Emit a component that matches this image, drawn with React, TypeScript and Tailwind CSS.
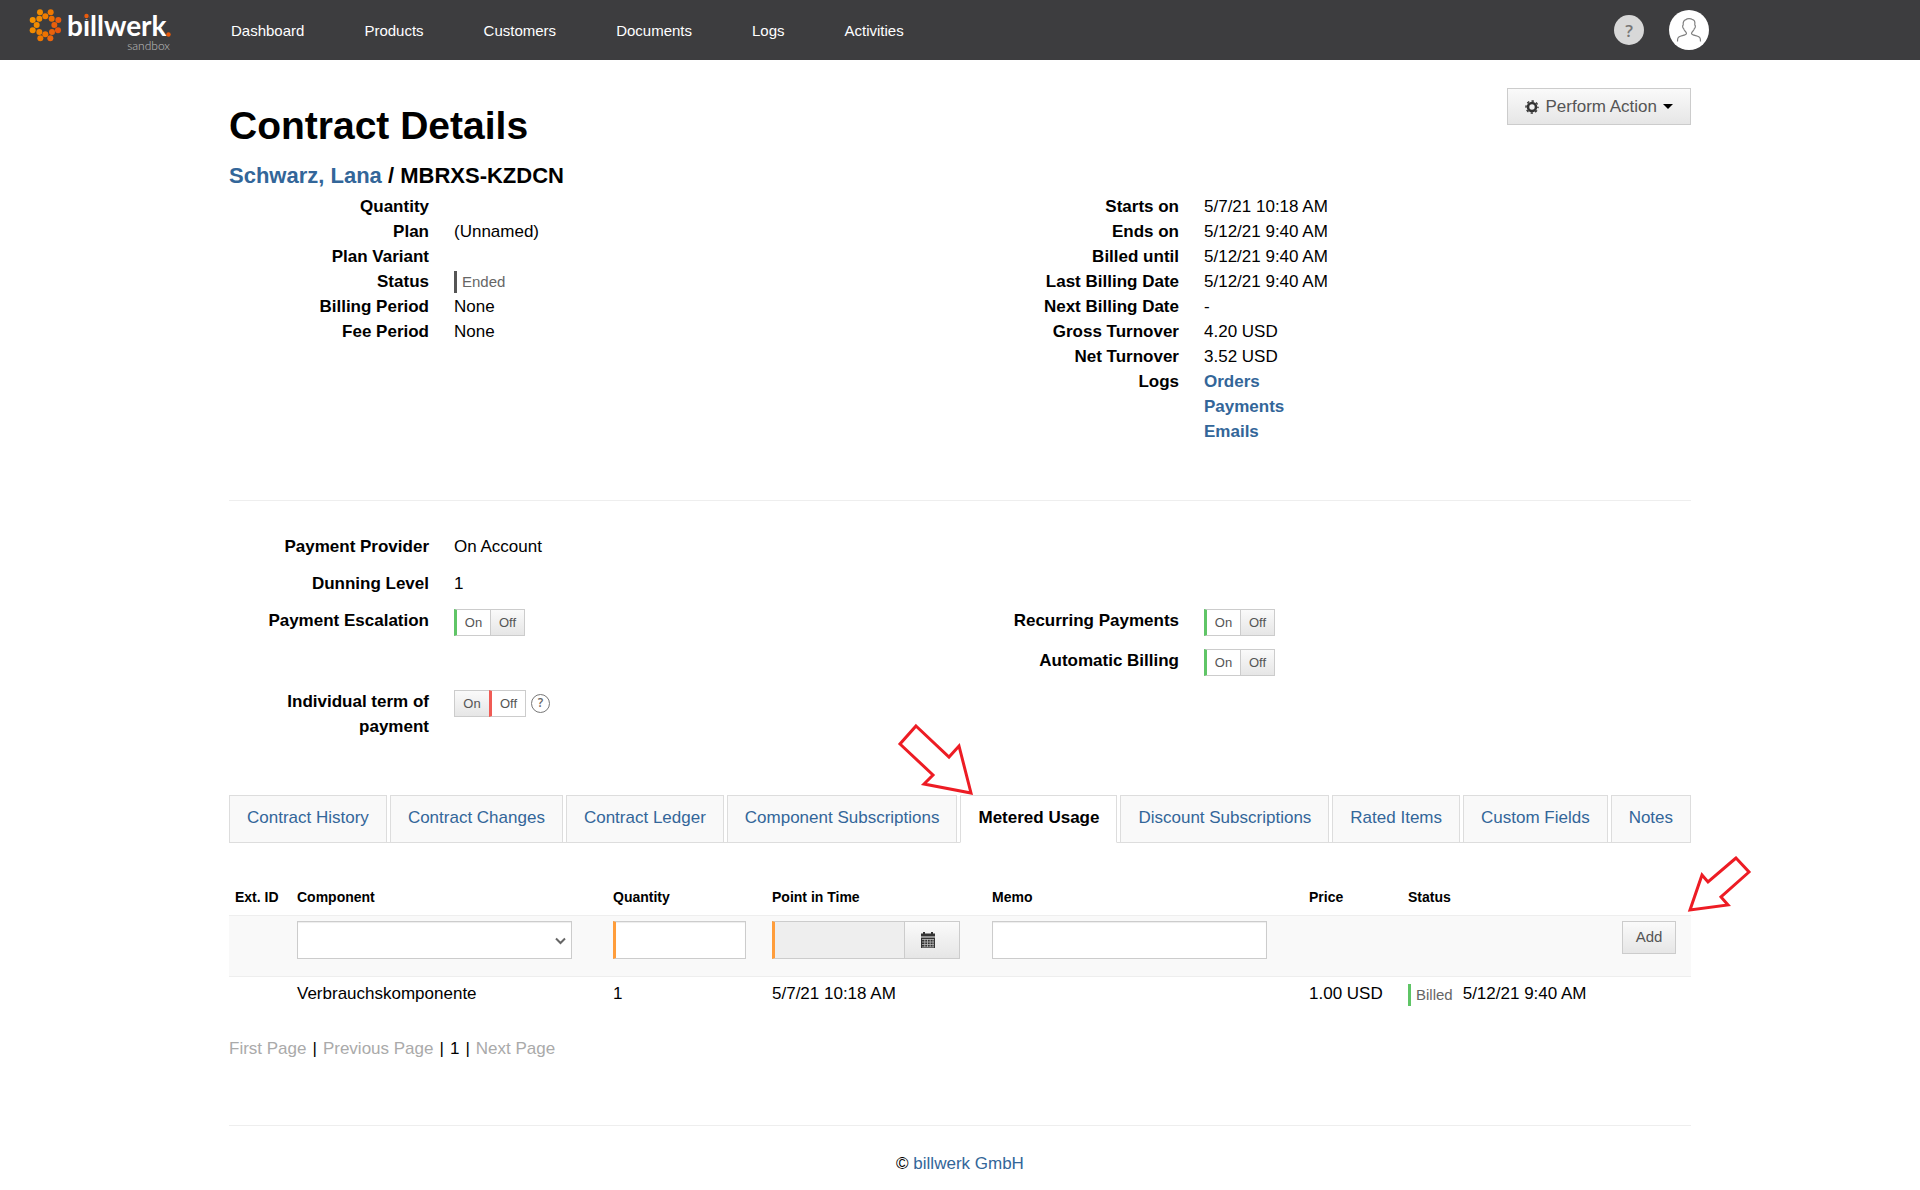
import type { ReactNode } from "react";
import clsx from "clsx";

const navItems = ["Dashboard", "Products", "Customers", "Documents", "Logs", "Activities"];

const tabs = [
  "Contract History",
  "Contract Changes",
  "Contract Ledger",
  "Component Subscriptions",
  "Metered Usage",
  "Discount Subscriptions",
  "Rated Items",
  "Custom Fields",
  "Notes",
];

const logoDots = [
  [75, 37, "#f08a00"], [107, 37, "#f07800"],
  [53, 60, "#f59200"], [73, 56, "#f28a00"], [91, 49, "#f07d00"], [110, 56, "#ee6d00"], [130, 60, "#ea5b0c"],
  [65, 75, "#f28c00"], [118, 75, "#ea5f0c"],
  [53, 91, "#f28c00"], [73, 96, "#f08000"], [91, 103, "#ee7200"], [111, 96, "#ea620c"], [129, 91, "#e8560c"],
  [76, 115, "#ee7800"], [106, 115, "#ec660c"],
] as const;

const Logo = () => (
  <a href="#" aria-label="billwerk sandbox">
    <svg width="142" height="60" viewBox="29 0 142 60">
      <g transform="translate(15 0) scale(0.3333)">
        {logoDots.map(([cx, cy, fill]) => (
          <circle key={`${cx}-${cy}`} cx={cx} cy={cy} r="9" fill={fill} />
        ))}
      </g>
      <text x="67" y="36" fill="#fff" fontFamily="Lato, sans-serif" fontWeight="700" fontSize="28">
        billwerk
      </text>
      {/* the i has an orange dot */}
      <rect x="84" y="12" width="5" height="7" fill="#3d3d3f" />
      <circle cx="86.500" cy="16" r="2.200" fill="#ea5b0c" />
      <circle cx="168.500" cy="34.500" r="2.200" fill="#ea5b0c" />
      <text x="170" y="50" textAnchor="end" fill="#c0c0c0" fontFamily="Lato, sans-serif" fontWeight="300" fontSize="12">
        sandbox
      </text>
    </svg>
  </a>
);

const Header = () => (
  <header className="flex h-[60px] items-center bg-[#3d3d3f] pr-[211px] pl-[29px]">
    <Logo />
    <nav className="ml-[60px] flex gap-[60px] text-[15px] text-white">
      {navItems.map((item) => (
        <a key={item} href="#">
          {item}
        </a>
      ))}
    </nav>
    <button
      aria-label="Help"
      className="ml-auto flex size-[30px] items-center justify-center rounded-full bg-[#d8d8d8] font-['Open_Sans',sans-serif] text-[17px] font-semibold text-[#777]"
    >
      ?
    </button>
    <button aria-label="Account" className="ml-[25px] flex size-10 items-center justify-center rounded-full bg-white">
      <svg width="26" height="26" viewBox="0 0 26 26" fill="none" stroke="#808080" strokeWidth="1.2">
        <path d="M1.5 24.500C1.500 21 2 19.800 5 19C8 18.200 10.500 17.800 10.500 16.500C10.500 14.500 8 14 7.600 11.500C6.500 11 6.300 8.500 7.200 8C6.800 4 8.500 3 10 2.600C11 1.500 14.500 1.300 16 2.300C18.500 2.500 19.200 5 18.800 8C19.700 8.500 19.500 11 18.400 11.500C18 14 15.500 14.500 15.500 16.500C15.500 17.800 18 18.200 21 19C24 19.800 24.500 21 24.500 24.500" />
      </svg>
    </button>
  </header>
);

const Row = ({ label, children }: { label: string; children?: ReactNode }) => (
  <div className="flex gap-[25px]">
    <dt className="w-[200px] shrink-0 text-right font-bold">{label}</dt>
    <dd>{children}</dd>
  </div>
);

const StatusLabel = ({ className, children }: { className: string; children: ReactNode }) => (
  <span className={clsx("inline-block h-[22px] border-l-3 pl-[5px] align-top text-[15px] leading-[22px] text-[#666]", className)}>
    {children}
  </span>
);

const Toggle = ({ label, on = true }: { label: string; on?: boolean }) => (
  <div role="group" aria-label={label} className="mt-px flex h-[27px] text-[13px] text-[#555]">
    <button
      aria-pressed={on}
      className={clsx(
        "border-y border-[#ccc]",
        on ? "w-9 border-l-3 border-l-[#5fc566] bg-white" : "w-[35px] border-l bg-linear-to-b from-[#fafafa] to-[#e6e6e6]"
      )}
    >
      On
    </button>
    <button
      aria-pressed={!on}
      className={clsx(
        "border border-[#ccc]",
        on ? "w-[35px] bg-linear-to-b from-[#fafafa] to-[#e6e6e6]" : "w-[37px] border-l-3 border-l-[#f05b55] bg-white"
      )}
    >
      Off
    </button>
  </div>
);

const Tabs = () => (
  <div role="tablist" className="flex h-12 gap-[3px] border-b border-[#ddd]">
    {tabs.map((tab) => {
      const active = tab === "Metered Usage";
      return (
        <div key={tab} className="relative">
          <button
            role="tab"
            aria-selected={active}
            className={clsx(
              "h-12 border border-[#ddd] px-[17px] pb-[3px] whitespace-nowrap",
              active ? "border-b-white bg-white font-bold text-black" : "bg-[#f9f9f9] text-[#336699]"
            )}
          >
            {tab}
          </button>
          {active && (
            <svg className="absolute -top-[73px] -left-16" width="80" height="76" fill="none" stroke="#ed1c24" strokeWidth="3">
              <path d="M20 4 53 35 63 24 75 71 28 62 37 53 4 22Z" />
            </svg>
          )}
        </div>
      );
    })}
  </div>
);

const CalendarIcon = () => (
  <svg width="14" height="16" viewBox="0 0 14 16">
    <path fill="#333" d="M0 1.500H2V0H4V1.500H10V0H12V1.500H14V4.500H0ZM0 5.500H14V16H0Z" />
    <path stroke="#bbb" strokeWidth="0.800" d="M1 7.500H13M1 10H13M1 12.500H13M1 15H13M3.800 7V15M6.500 7V15M9.200 7V15M12 7V15" />
  </svg>
);

const UsageTable = () => (
  <div className="relative mt-[42px]">
    <table className="w-full table-fixed text-left">
      <colgroup>
        <col className="w-[62px]" />
        <col className="w-[316px]" />
        <col className="w-[159px]" />
        <col className="w-[220px]" />
        <col className="w-[317px]" />
        <col className="w-[99px]" />
        <col className="w-[214px]" />
        <col className="w-[75px]" />
      </colgroup>
      <thead>
        <tr className="h-[30px] align-top text-[14px] leading-[25px] whitespace-nowrap">
          <th className="px-[6px]">Ext. ID</th>
          <th className="px-[6px]" id="component">Component</th>
          <th className="px-[6px]" id="quantity">Quantity</th>
          <th className="px-[6px]" id="time">Point in Time</th>
          <th className="px-[6px]" id="memo">Memo</th>
          <th className="px-[6px]">Price</th>
          <th className="px-[6px]">Status</th>
          <th aria-label="Actions" />
        </tr>
      </thead>
      <tbody>
        <tr className="h-[61px] border-y border-[#eee] bg-[#f9f9f9] align-top">
          <td />
          <td className="px-[6px] pt-[5px]">
            <div className="relative w-[275px]">
              <select
                aria-labelledby="component"
                className="block h-[38px] w-full appearance-none border border-[#ccc] bg-white shadow-[inset_0_1px_1px_rgba(0,0,0,0.075)]"
              />
              <svg className="pointer-events-none absolute top-[16px] right-[6px]" width="11" height="8" fill="none" stroke="#666" strokeWidth="2">
                <path d="M1 1.500 5.500 6 10 1.500" />
              </svg>
            </div>
          </td>
          <td className="px-[6px] pt-[5px]">
            <input
              aria-labelledby="quantity"
              className="block h-[38px] w-[133px] border border-l-3 border-[#ccc] border-l-[#ff9d3b] bg-white shadow-[inset_0_1px_1px_rgba(0,0,0,0.075)]"
            />
          </td>
          <td className="px-[6px] pt-[5px]">
            <div className="flex">
              <input
                aria-labelledby="time"
                readOnly
                className="h-[38px] w-[132px] border border-r-0 border-l-3 border-[#ccc] border-l-[#ff9d3b] bg-[#eee]"
              />
              <button
                aria-label="Pick date"
                className="flex h-[38px] w-14 items-center border border-[#ccc] bg-linear-to-b from-[#fafafa] to-[#e6e6e6] pl-[16px]"
              >
                <CalendarIcon />
              </button>
            </div>
          </td>
          <td className="px-[6px] pt-[5px]">
            <input
              aria-labelledby="memo"
              className="block h-[38px] w-[275px] border border-[#ccc] bg-white shadow-[inset_0_1px_1px_rgba(0,0,0,0.075)]"
            />
          </td>
          <td />
          <td />
          <td className="px-[6px] pt-[5px]">
            <button className="h-[33px] w-[54px] border border-[#ccc] bg-linear-to-b from-[#fafafa] to-[#e6e6e6] pb-[2px] text-[15px] text-[#555]">
              Add
            </button>
          </td>
        </tr>
        <tr className="align-top whitespace-nowrap">
          <td />
          <td className="px-[6px] pt-1">Verbrauchskomponente</td>
          <td className="px-[6px] pt-1">1</td>
          <td className="px-[6px] pt-1">5/7/21 10:18 AM</td>
          <td />
          <td className="px-[6px] pt-1">1.00 USD</td>
          <td className="px-[6px] pt-1">
            <div className="flex gap-[10px]">
              <StatusLabel className="mt-[3px] border-[#5fc566]">Billed</StatusLabel>
              5/12/21 9:40 AM
            </div>
          </td>
          <td />
        </tr>
      </tbody>
    </table>
    <svg className="absolute -top-[31px] left-full -ml-[5px]" width="68" height="62" fill="none" stroke="#ed1c24" strokeWidth="3">
      <path d="M50 4 22 28 16 21 4 56 42 51 35 43 63 18Z" />
    </svg>
  </div>
);

const App = () => {
  return (
    <div className="min-h-screen bg-white font-['Liberation_Sans',Arial,sans-serif] text-[17px] leading-[25px] text-black">
      <Header />
      <main className="mx-auto max-w-[1462px] pt-7">
        <div className="flex items-start justify-between">
          <h1 className="mt-[13px] text-[39px] leading-[50px] font-bold">Contract Details</h1>
          <button className="flex h-[37px] items-center border border-[#ccc] bg-linear-to-b from-[#fafafa] to-[#e6e6e6] px-[17px] text-[#555]">
            <svg width="14" height="14" viewBox="0 0 14 14" fill="none" stroke="#333">
              <circle cx="7" cy="7" r="4" strokeWidth="2.600" />
              <circle cx="7" cy="7" r="6" strokeWidth="1.400" strokeDasharray="2.360 2.352" strokeDashoffset="1.180" />
            </svg>
            <span className="ml-[7px]">Perform Action</span>
            <svg className="ml-[6px]" width="10" height="5" fill="#000">
              <path d="M0 0H10L5 5Z" />
            </svg>
          </button>
        </div>

        <h2 className="mt-3 text-[22px] leading-[26px] font-bold">
          <a href="#" className="text-[#336699]">
            Schwarz, Lana
          </a>{" "}
          / MBRXS-KZDCN
        </h2>

        <section className="mt-[5px] grid grid-cols-2 gap-[38px]">
          <dl>
            <Row label="Quantity" />
            <Row label="Plan">(Unnamed)</Row>
            <Row label="Plan Variant" />
            <Row label="Status">
              <StatusLabel className="mt-[2px] border-[#555]">Ended</StatusLabel>
            </Row>
            <Row label="Billing Period">None</Row>
            <Row label="Fee Period">None</Row>
          </dl>
          <dl>
            <Row label="Starts on">5/7/21 10:18 AM</Row>
            <Row label="Ends on">5/12/21 9:40 AM</Row>
            <Row label="Billed until">5/12/21 9:40 AM</Row>
            <Row label="Last Billing Date">5/12/21 9:40 AM</Row>
            <Row label="Next Billing Date">-</Row>
            <Row label="Gross Turnover">4.20 USD</Row>
            <Row label="Net Turnover">3.52 USD</Row>
            <Row label="Logs">
              <div className="flex flex-col font-bold text-[#336699]">
                <a href="#">Orders</a>
                <a href="#">Payments</a>
                <a href="#">Emails</a>
              </div>
            </Row>
          </dl>
        </section>

        <hr className="mt-14 border-[#eee]" />

        <section className="mt-[33px] grid grid-cols-2 gap-[38px]">
          <dl>
            <Row label="Payment Provider">On Account</Row>
            <div className="mt-3">
              <Row label="Dunning Level">1</Row>
            </div>
            <div className="mt-3">
              <Row label="Payment Escalation">
                <Toggle label="Payment Escalation" />
              </Row>
            </div>
            <div className="mt-[53px]">
              <Row label="Individual term of payment">
                <div className="flex items-center gap-[5px]">
                  <Toggle label="Individual term of payment" on={false} />
                  <button
                    aria-label="About individual term of payment"
                    className="flex size-[19px] items-center justify-center rounded-full border border-[#777] font-['Open_Sans',sans-serif] text-[12px] leading-none font-semibold text-[#666]"
                  >
                    ?
                  </button>
                </div>
              </Row>
            </div>
          </dl>
          <dl className="pt-[74px]">
            <Row label="Recurring Payments">
              <Toggle label="Recurring Payments" />
            </Row>
            <div className="mt-3">
              <Row label="Automatic Billing">
                <Toggle label="Automatic Billing" />
              </Row>
            </div>
          </dl>
        </section>

        <section className="mt-14">
          <Tabs />
          <UsageTable />
          <div className="mt-[30px] flex gap-[6px]">
            <span className="text-[#aaa]">First Page</span>|<span className="text-[#aaa]">Previous Page</span>|<span>1</span>|
            <span className="text-[#aaa]">Next Page</span>
          </div>
        </section>

        <footer className="mt-16 border-t border-[#eee] pt-[25px] text-center">
          ©{" "}
          <a href="#" className="text-[#336699]">
            billwerk GmbH
          </a>
        </footer>
      </main>
    </div>
  );
};

export default App;
